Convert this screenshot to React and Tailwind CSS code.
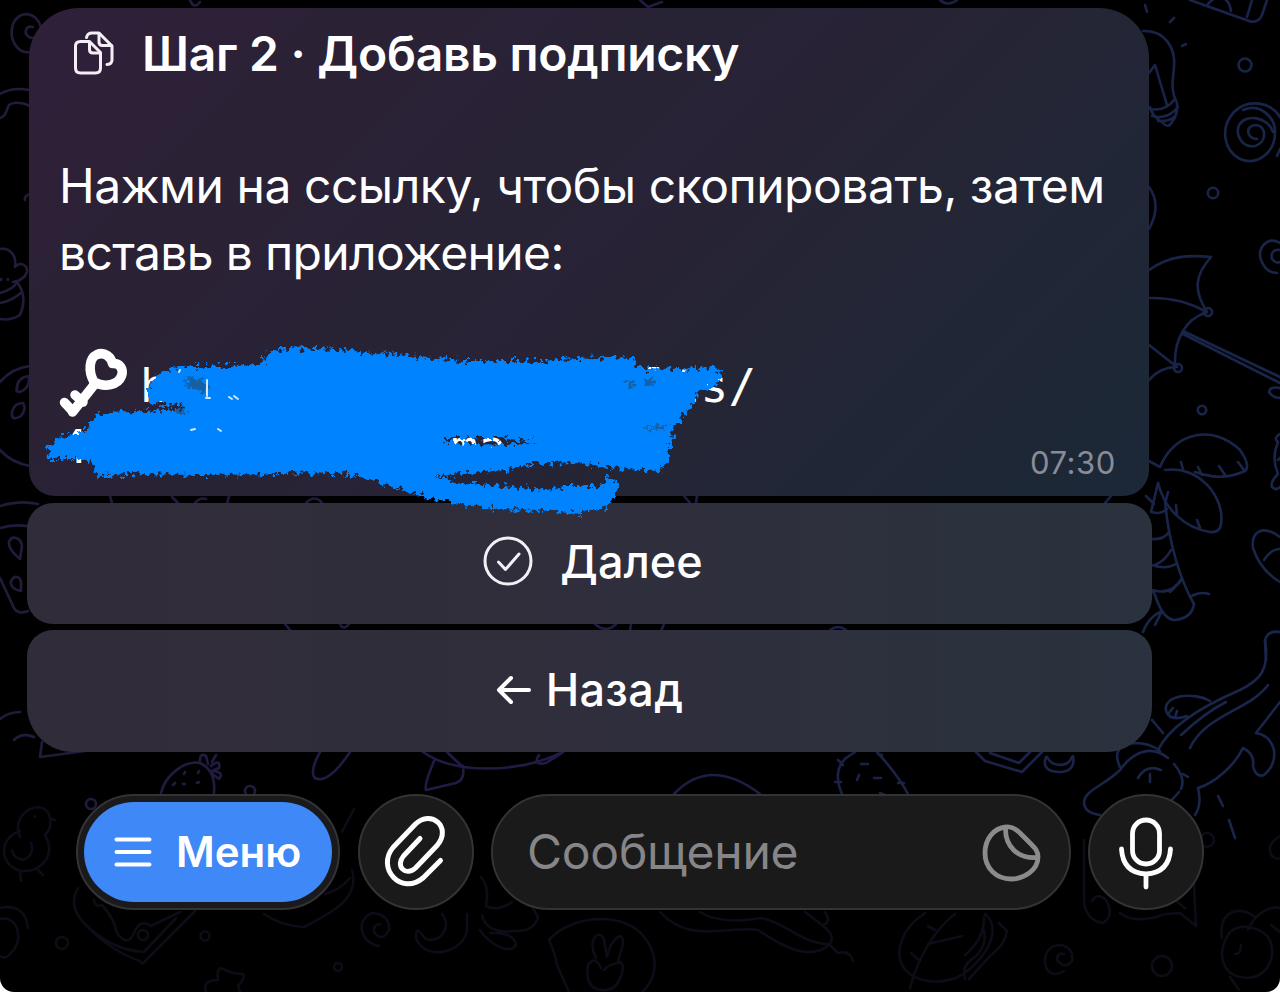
import React from "react"

const doodles = [
  // left edge
  "M41 27C36 12 20 9 13 24C8 40 18 54 30 52M33 27C26 25 23 33 29 37Q33 39 36 37",
  "M0 94C8 89 18 88 29 90M0 118C10 115 4 104 14 103Q22 102 30 106M25 200Q24 196 30 194",
  "M0 249C10 247 17 256 15 267C20 261 28 265 27 272C25 278 19 281 13 282M0 293Q14 289 17 282C26 294 24 306 20 315Q10 321 0 319M0 303Q12 301 22 292M1 279v1M8 279v1",
  "M0 382Q12 368 30 366M0 450Q12 463 30 466M17 390Q16 378 29 376M12 412Q14 403 23 403Q27 408 21 416Q11 422 12 412M29 377Q30 388 20 392Q15 392 17 388",
  "M0 506Q20 500 38 504M0 528Q12 524 27 526M20 559C14 554 8 548 9 542C12 534 21 538 22 546ZM21 591C15 590 10 587 11 581C15 574 21 577 21 583ZM0 578L14 608Q18 615 28 611",
  "M0 719Q8 712 20 712M14 740Q22 732 34 737M42 742L40 757L85 751",
  // gaps between the bubbles
  "M190 0Q194 10 200 2M110 496L112 503M172 497L178 503M195 503Q200 497 206 499M229 496L227 504M306 503Q315 494 322 503M684 496L690 503M697 496L696 503",
  "M285 624L291 631M340 624Q343 631 349 624M595 624Q606 634 616 624M631 625L630 630M664 624L661 631M830 630Q838 624 846 630M1105 503L1111 496",
  // top right
  "M1145 5L1147 12M1170 22L1174 18M1182 46L1186 44M1190 0L1249 21Q1258 24 1262 15L1267 0M1247 17L1252 0M1208 4C1218 -8 1229 -3 1231 11M640 0L648 7L662 2M940 0Q948 7 957 0",
  "M1143 31C1165 30 1176 48 1174 68C1173 80 1170 90 1177 103Q1178 115 1172 122Q1168 129 1163 123Q1151 115 1150 107M1149 73L1155 65L1167 105M1150 109Q1165 112 1175 99M1152 116Q1168 120 1178 107M1158 121Q1168 122 1174 117",
  "M1280 117C1271 102 1248 98 1234 112C1220 127 1223 150 1240 159C1256 166 1274 154 1275 134C1276 116 1259 103 1243 110M1257 139C1246 139 1245 125 1256 125C1267 126 1267 143 1255 146C1242 148 1235 135 1239 125C1246 113 1268 117 1273 132M1277 156L1280 149",
  "M1149 187Q1162 205 1149 229M1149 270C1170 255 1190 255 1211 257C1195 275 1193 290 1207 312M1149 298Q1180 297 1207 312Q1190 318 1183 331M1149 345L1177 367Q1160 367 1149 380M1175 367Q1174 345 1183 331M1183 331L1280 377M1183 334L1280 383M1280 243C1268 236 1257 247 1261 260Q1266 273 1277 273M1280 250Q1270 249 1272 259Q1276 264 1280 262",
  "M1280 388Q1270 386 1269 392Q1273 398 1280 398M1280 434Q1273 438 1278 442Q1271 458 1278 474Q1270 482 1272 487Q1276 491 1280 487M1278 460L1280 458",
  // palm
  "M1160 467C1175 430 1215 425 1240 450Q1251 466 1245 471C1225 480 1210 477 1195 472M1149 461L1160 467M1165 470C1200 465 1225 498 1221 524Q1220 533 1210 532C1185 528 1165 510 1158 483M1181 462L1183 469M1198 467L1202 475M1219 466L1225 475M1238 462L1244 470M1168 492L1166 500M1176 505L1177 515M1197 520L1200 528",
  "M1158 483L1151 512M1165 500C1168 540 1180 580 1194 604Q1192 618 1175 620Q1163 620 1155 595L1152 590M1146 496L1154 504M1152 512Q1160 515 1167 509M1152 539Q1164 540 1169 532M1155 565Q1166 560 1171 550M1152 565Q1166 570 1176 564M1152 590Q1172 596 1182 578M1180 582L1170 592M1190 597Q1200 591 1209 594M1143 632Q1148 618 1160 612M1155 625L1161 613",
  "M1280 537C1262 524 1251 532 1253 548Q1260 570 1280 582M1264 560Q1271 549 1280 549M1266 660L1265 640Q1268 630 1280 632",
  // crocodile
  "M1265 640C1270 670 1260 680 1240 690C1205 705 1170 725 1158 750M1268 685C1250 710 1205 715 1190 748M1226 702C1210 710 1195 722 1181 735M1210 701C1195 692 1163 694 1166 711Q1170 722 1187 716M1168 714L1173 708M1175 717L1177 711",
  "M1168 758C1148 742 1130 756 1120 770C1105 785 1085 790 1084 802Q1084 813 1100 815M1120 767C1112 750 1122 744 1135 743Q1150 743 1160 751M1138 778Q1146 764 1161 770M1150 774v8M1174 764Q1186 778 1181 789M1179 792L1170 802M1183 774L1188 777M1152 720L1163 733",
  "M1198 788C1215 783 1235 765 1243 748Q1255 754 1253 766Q1256 778 1264 775Q1276 765 1274 750Q1270 735 1256 733L1280 702M1198 788Q1202 805 1195 815M1218 796L1223 806M1229 820L1235 838",
  // strip above the input
  "M161 793C165 775 185 760 200 763Q216 770 214 793M200 763Q199 752 206 756L208 764M212 762L216 755M211 766Q221 758 219 768L212 771Q225 772 219 779L211 773M173 785l2-2M184 774l1-2M198 773l1-2M183 784h2M197 783l2-1",
  "M350 752C338 770 325 783 315 778Q309 772 320 752M434 761Q424 785 426 790L456 783Q465 780 463 767M423 752C455 775 520 773 563 752M447 752Q460 765 463 766M539 755Q532 766 546 763L562 753M674 794Q710 756 760 794",
  "M842 794Q832 771 846 758L855 752M877 752Q898 775 908 794M838 760l5 5M835 782h6M878 754l4 1M898 783h6M861 764h7M857 780l2-5M874 778h7M880 793l5 2",
  "M976 752L985 761L1022 772L1042 752M990 753L1019 763L1030 752M1046 757C1042 767 1048 772 1060 772C1070 772 1075 766 1073 756M1047 757C1052 767 1068 768 1072 757",
]

const faintDoodles = [
  "M20 837C10 815 39 797 49 814Q53 828 45 835C57 856 40 873 21 871C-1 866 -2 838 20 831M35 816v1M50 818l5 2M31 843Q35 855 23 860Q13 858 12 850M20 873L21 881M38 870l5 5",
  "M0 908Q25 903 28 928M0 919C17 914 25 940 11 953Q5 960 0 956M78 888Q68 905 83 922Q108 950 140 961Q142 966 146 960L195 911M94 900Q95 908 102 905Q114 918 117 933Q128 948 134 933Q140 918 151 926L180 912M83 922Q110 950 144 952L176 918",
  "M206 992Q202 980 218 980Q216 964 225 970Q234 974 243 974Q246 977 238 986L240 992M354 809L342 832M352 870C361 900 327 915 304 927Q281 926 264 914M350 878Q340 890 325 894",
  "M379 946C360 943 355 920 372 913Q390 914 389 930Q382 943 374 932Q373 924 380 924M442 914C455 930 433 948 423 936Q416 925 416 938C425 962 464 953 467 930V914M482 915C485 930 500 933 513 931Q535 932 538 917L530 903M480 930C490 945 510 955 516 945Q514 932 490 933M481 877Q490 888 486 906Q498 912 512 902",
  "M549 940C570 915 625 910 645 938C667 968 645 990 642 992M549 940Q555 953 557 965L569 992M596 958C586 940 600 927 604 940L607 957C612 936 624 930 623 944L618 961Q626 963 621 976Q615 994 597 989Q585 985 588 965Q595 955 601 968M620 963Q608 964 604 970",
  "M660 912C690 945 730 925 758 930C780 945 810 963 830 944Q836 935 822 925L805 912M700 912Q720 925 762 918C790 925 800 943 828 944M825 912Q832 922 823 925M830 945L838 953Q850 950 853 961",
  "M985 914C1005 930 982 965 956 978C920 990 890 970 902 940Q907 925 925 913M910 988C920 950 940 925 955 914M928 944L962 936M911 953L920 961M935 930L928 926M984 917Q985 938 965 955M965 979Q961 965 975 957Q987 946 984 930M999 923L1007 931Q1005 945 990 956L969 979",
  "M1064 971C1042 985 1037 945 1060 945Q1074 947 1072 961Q1065 970 1057 960Q1057 952 1064 954M1084 840V900Q1085 920 1103 923Q1115 915 1106 900Q1097 892 1092 901M1120 913Q1135 925 1165 914L1180 913L1196 926L1194 885M1160 888L1185 908",
  "M1222 938C1218 910 1240 905 1255 917M1248 930C1256 910 1274 906 1280 908M1230 932C1214 955 1225 975 1240 977C1265 982 1277 960 1270 940C1263 928 1242 922 1230 932M1235 954Q1241 954 1241 945M1230 977L1239 990M1280 836Q1265 845 1272 856Q1277 860 1280 858M1271 925L1280 932",
]

const dots = [
  [1245, 65, 6.5],
  [1213, 193, 5.2],
  [1208, 312, 4],
  [1178, 368, 4],
  [1202, 410, 4.2],
  [91, 804, 5],
  [250, 791, 5],
]

const faintDots = [
  [62, 943, 6],
  [143, 935, 5],
  [205, 936, 4.5],
  [338, 967, 4],
  [1162, 966, 10],
  [1207, 840, 7],
]

function Wallpaper() {
  return (
    <svg className="absolute inset-0 h-full w-full" viewBox="0 0 1280 992" fill="none" strokeLinecap="round" strokeLinejoin="round">
      <defs>
        <linearGradient id="ink" gradientUnits="userSpaceOnUse" x1="0" y1="0" x2="1280" y2="300">
          <stop offset="0" stopColor="#241b39" />
          <stop offset="0.45" stopColor="#211a45" />
          <stop offset="0.85" stopColor="#1a2248" />
          <stop offset="1" stopColor="#19254a" />
        </linearGradient>
      </defs>
      <g stroke="url(#ink)" strokeWidth="2.6">
        {doodles.map((d, index) => <path key={index} d={d} />)}
        {dots.map(([x, y, r], index) => <circle key={index} cx={x} cy={y} r={r} />)}
      </g>
      <g stroke="#0d0c17" strokeWidth="2.6">
        {faintDoodles.map((d, index) => <path key={index} d={d} />)}
        {faintDots.map(([x, y, r], index) => <circle key={index} cx={x} cy={y} r={r} />)}
      </g>
    </svg>
  )
}

// marker stroke that hides the personal link
function Scribble() {
  return (
    <svg className="pointer-events-none absolute left-0 top-0 h-[530px] w-[760px]" viewBox="0 0 760 530">
      <defs>
        <filter id="rough" filterUnits="userSpaceOnUse" x="0" y="300" width="760" height="230">
          <feTurbulence type="fractalNoise" baseFrequency="0.2" numOctaves="3" seed="4" result="noise" />
          <feDisplacementMap in="SourceGraphic" in2="noise" scale="15" xChannelSelector="R" yChannelSelector="G" />
          <feGaussianBlur stdDeviation="0.6" />
        </filter>
      </defs>
      <g filter="url(#rough)">
        <path
          fill="#0083ff"
          fillRule="evenodd"
          d="M148 400L148 388L156 376L166 370L182 366L230 366L262 365L268 352L290 348L340 350L400 355L460 361L540 361L600 358L633 357L640 368L680 369L714 367L723 373L716 386L698 393L694 402L684 416L672 428L675 436L668 447L668 460L660 471L620 469L580 463L530 464L505 470L470 473L436 476L455 482L500 486L545 490L570 486L600 486L607 477L617 480L617 495L606 507L580 514L545 510L500 509L465 505L420 496L395 488L360 476L340 473L280 474L200 475L130 474L98 475L88 460L70 459L49 459L48 450L56 438L70 435L84 432L92 420L104 412L140 411L178 410L184 405L150 403ZM444 438L500 438L537 442L505 445L448 443Z"
        />
        <path
          d="M182 380L198 378L207 383L205 392L192 389ZM626 382L634 380L636 387L629 388ZM643 379L653 378L654 385L645 386ZM645 427L668 425L667 428L646 429ZM176 412L180 408L190 411L184 416Z"
          fill="#18598f"
          opacity="0.8"
        />
      </g>
      {/* bits of the link that show through */}
      <path
        d="M179 372l1-2M207 380v16M206 398h4M229 397l3 2M234 396l4 3M191 430l4-1M218 429l3 2"
        fill="none"
        stroke="#cfe6ff"
        strokeWidth="2"
        strokeLinecap="round"
      />
    </svg>
  )
}

function PagesIcon() {
  return (
    <svg className="-mt-[3px] h-[48px] w-[44px]" viewBox="0 0 44 48" fill="none" stroke="#f4eff6" strokeWidth="3" strokeLinecap="round" strokeLinejoin="round">
      <path d="M8.500 12.500H17.500L28.500 23.500V39Q28.500 44 23.500 44H8.500Q3.500 44 3.500 39V17Q3.500 12.500 8.500 12.500Z" />
      <path d="M17.500 13V20.500Q17.500 24 21 24H28" />
      <path d="M14.500 8.500Q15.500 4 20 4H27L40 17V31Q40 35 35 35.500" />
      <path d="M27 4.500V13Q27 16.500 30.500 16.500H39.500" />
    </svg>
  )
}

function KeyIcon() {
  return (
    <svg className="h-[68px] w-[68px] overflow-visible" viewBox="0 0 68 68" fill="none" stroke="#fff" strokeWidth="9.500" strokeLinecap="round" strokeLinejoin="round">
      <path d="M34 32C28 21 29 8 37 4.500C45 1.500 51 7 52.500 13.500C60 13 64 19 61.500 26C58 35 45 38 34 32Z" />
      <path d="M34 35L12.500 62" />
      <path d="M12.500 61L4.500 52.500M23 52L15 45" />
    </svg>
  )
}

function ReplyButton({ className, children }) {
  return (
    <button className={"flex w-[1125px] shrink-0 items-center justify-center bg-gradient-to-r from-[#312c39] via-[#302e3c] to-[#29323e] text-[45px] font-medium text-white " + className}>
      {children}
    </button>
  )
}

function Composer() {
  return (
    <div className="ml-[76px] mt-[42px] flex h-[116px] items-center">
      <div className="h-[116px] w-[264px] shrink-0 rounded-full border-2 border-[#333335] bg-[#1a1a1c] p-[6px]">
        <button className="flex h-full w-full items-center rounded-full bg-[#3e88f7] pl-[30px] text-white">
          <svg className="h-[32px] w-[38px] shrink-0" viewBox="0 0 38 32" stroke="currentColor" strokeWidth="4" strokeLinecap="round">
            <path d="M2.500 3.500H35.500M2.500 16H35.500M2.500 28.500H35.500" />
          </svg>
          <span className="ml-[24px] text-[42px] font-semibold leading-none">Меню</span>
        </button>
      </div>

      <button className="ml-[18px] flex h-[116px] w-[116px] shrink-0 items-center justify-center rounded-full border-2 border-[#333335] bg-[#1a1a1b]">
        <svg className="h-[72px] w-[64px] overflow-visible" viewBox="0 0 64 72" fill="none" stroke="#fff" strokeWidth="5" strokeLinecap="round" strokeLinejoin="round">
          <path d="M36 22.500L19.500 40C11 50 21.500 61 31.500 52L53.500 29C68 11 47-7 31.500 8L9 31.500C-8 52 17 80 39 62L56.500 44.500" />
        </svg>
      </button>

      <div className="ml-[17px] flex h-[116px] w-[580px] shrink-0 items-center justify-between rounded-full border-2 border-[#333335] bg-[#1a1a1b] pl-[34px] pr-[28px]">
        <span className="text-[48px] leading-none tracking-[-0.25px] text-[#868688]">Сообщение</span>
        <svg className="mt-[2px] h-[60px] w-[60px]" viewBox="0 0 60 60" fill="none" stroke="#8b8b8d" strokeWidth="4.800" strokeLinecap="round" strokeLinejoin="round">
          <path d="M25 4C12 5 4 17 4 30C4 45 15 56 30 56C43 56 57 47 57 34C57 28 54 25 50 21L39 10C35 6 31 3 25 4Z" />
          <path d="M24.500 4.500C24 23 36 36 56.500 34.500" />
        </svg>
      </div>

      <button className="ml-[17px] flex h-[116px] w-[116px] shrink-0 items-center justify-center rounded-full border-2 border-[#333335] bg-[#1a1a1b]">
        <svg className="mt-[1px] h-[76px] w-[60px]" viewBox="0 0 60 76" fill="none" stroke="#fff" strokeWidth="4.800" strokeLinecap="round">
          <rect x="16.500" y="5" width="27" height="44" rx="13.500" />
          <path d="M5.500 34Q7 58 30 59Q53 58 54.500 34M30 59V72" />
        </svg>
      </button>
    </div>
  )
}

export default function App() {
  return (
    <div className="h-[992px] w-[1280px] overflow-hidden bg-white font-['Inter','Liberation_Sans',sans-serif]">
      <main className="relative h-full w-full overflow-hidden rounded-b-[14px] bg-black">
        <Wallpaper />

        <div className="relative flex flex-col pt-[8px]">
          <section className="ml-[29px] h-[488px] w-[1120px] rounded-b-[26px] rounded-t-[50px] bg-[linear-gradient(135deg,#30203a_0%,#2b2135_20%,#272335_55%,#232636_72%,#1d2736_90%,#1c2838_100%)] pl-[31px] pt-[13px] text-white">
            <h1 className="flex h-[66px] items-center whitespace-nowrap text-[48px] font-semibold leading-[66px] tracking-[-0.27px]">
              <span className="ml-[12px] w-[70px]">
                <PagesIcon />
              </span>
              Шаг 2 · Добавь подписку
            </h1>
            <p className="-ml-px mt-[65px] whitespace-nowrap text-[48px] leading-[67px] tracking-[-0.47px]">
              Нажми на ссылку, чтобы скопировать, затем
              <br />
              <span className="tracking-[-0.65px]">вставь в приложение:</span>
            </p>
            <div className="mt-[64px] flex h-[72px] items-start">
              <KeyIcon />
              <code className="ml-[12px] whitespace-pre pt-[6px] font-['DejaVu_Sans_Mono',monospace] text-[46px] leading-[61px] tracking-[0.33px]">
                {"h                 lts/"}
              </code>
            </div>
            <div className="-mt-[5px] flex justify-between pr-[33px]">
              <code className="whitespace-pre font-['DejaVu_Sans_Mono',monospace] text-[46px] leading-[61px] tracking-[0.2px]">
                {"4             ma"}
              </code>
              <time className="mt-[26px] text-[31px] leading-[40px] tracking-[0.6px] text-[#8a8b98]">07:30</time>
            </div>
          </section>

          <ReplyButton className="ml-[27px] mt-[7px] h-[121px] rounded-[26px] pb-[4px] pl-[7px]">
            <svg className="-mt-[2px] mr-[27px] h-[50px] w-[50px]" viewBox="0 0 50 50" fill="none" stroke="#f2f0f5" strokeWidth="3" strokeLinecap="round" strokeLinejoin="round">
              <circle cx="25" cy="25" r="23" />
              <path d="M15.500 26L22.500 33.500L36 18" />
            </svg>
            Далее
          </ReplyButton>
          <ReplyButton className="ml-[27px] mt-[6px] h-[122px] rounded-b-[46px] rounded-t-[26px] pb-[2px] tracking-[0.3px]">
            <svg className="mr-[15px] h-[30px] w-[35px]" viewBox="0 0 35 30" fill="none" stroke="currentColor" strokeWidth="4" strokeLinecap="round" strokeLinejoin="round">
              <path d="M33 15H3M15 3L3 15L15 27" />
            </svg>
            Назад
          </ReplyButton>

          <Composer />
        </div>

        <Scribble />
      </main>
    </div>
  )
}
